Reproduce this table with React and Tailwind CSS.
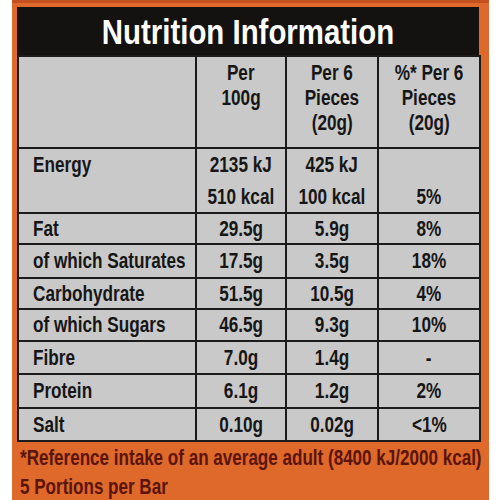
import React from "react";

const font = {
  fontFamily: '"Liberation Sans", Arial, sans-serif',
};

const rows = [
  { name: "Fat", a: "29.5g", b: "5.9g", c: "8%", h: "h-[31px]" },
  { name: "of which Saturates", a: "17.5g", b: "3.5g", c: "18%", h: "h-[34px]" },
  { name: "Carbohydrate", a: "51.5g", b: "10.5g", c: "4%", h: "h-[31px]" },
  { name: "of which Sugars", a: "46.5g", b: "9.3g", c: "10%", h: "h-[32px]" },
  { name: "Fibre", a: "7.0g", b: "1.4g", c: "-", h: "h-[33px]" },
  { name: "Protein", a: "6.1g", b: "1.2g", c: "2%", h: "h-[34px]" },
  { name: "Salt", a: "0.10g", b: "0.02g", c: "<1%", h: "h-[33px]" },
];

const cell = "border-2 border-[#1b1b1b] text-center p-0 whitespace-nowrap leading-[24px]";

// condensed look: narrow the glyphs without touching layout
const Txt = ({ children, left }) => (
  <span className={"inline-block scale-x-[0.78] " + (left ? "origin-left" : "origin-center")}>
    {children}
  </span>
);

export default function App() {
  return (
    <div className="w-[500px] h-[500px] bg-white overflow-hidden" style={font}>
      <div className="ml-[12px] w-[477px] h-full bg-[#df682b] pt-[4px] pl-[5px] border-t-[3px] border-[#c4501f]">
        <div className="w-[462px] h-[48px] bg-[#141111] flex items-center justify-center">
          <span className="inline-block scale-x-[0.84] text-white font-bold text-[35px] leading-none">
            Nutrition Information
          </span>
        </div>
        <table className="w-[462px] border-collapse bg-[#c9c9c9] text-[#161616] font-bold text-[22px] table-fixed">
          <colgroup>
            <col className="w-[178px]" />
            <col className="w-[90px]" />
            <col className="w-[92px]" />
            <col className="w-[102px]" />
          </colgroup>
          <tbody>
            <tr className="h-[92px]">
              <td className={cell}></td>
              <td className={cell + " align-top pt-[3px] leading-[25px]"}>
                <Txt>Per</Txt>
                <br />
                <Txt>100g</Txt>
              </td>
              <td className={cell + " align-top pt-[3px] leading-[25px]"}>
                <Txt>Per 6</Txt>
                <br />
                <Txt>Pieces</Txt>
                <br />
                <Txt>(20g)</Txt>
              </td>
              <td className={cell + " align-top pt-[3px] leading-[25px]"}>
                <Txt>%* Per 6</Txt>
                <br />
                <Txt>Pieces</Txt>
                <br />
                <Txt>(20g)</Txt>
              </td>
            </tr>
            <tr className="h-[65px]">
              <td className={cell + " text-left pl-[14px] align-top pt-[4px]"}>
                <Txt left>Energy</Txt>
              </td>
              <td className={cell + " align-top pt-[4px]"}>
                <div className="h-[32px]">
                  <Txt>2135 kJ</Txt>
                </div>
                <Txt>510 kcal</Txt>
              </td>
              <td className={cell + " align-top pt-[4px]"}>
                <div className="h-[32px]">
                  <Txt>425 kJ</Txt>
                </div>
                <Txt>100 kcal</Txt>
              </td>
              <td className={cell + " align-top pt-[36px]"}>
                <Txt>5%</Txt>
              </td>
            </tr>
            {rows.map((r) => (
              <tr key={r.name} className={r.h}>
                <td className={cell + " align-middle text-left pl-[14px]"}>
                  <Txt left>{r.name}</Txt>
                </td>
                <td className={cell + " align-middle"}>
                  <Txt>{r.a}</Txt>
                </td>
                <td className={cell + " align-middle"}>
                  <Txt>{r.b}</Txt>
                </td>
                <td className={cell + " align-middle"}>
                  <Txt>{r.c}</Txt>
                </td>
              </tr>
            ))}
          </tbody>
        </table>
        <div className="pt-[1px] pl-[3px] text-[#5a1409] font-bold text-[22px] leading-[29px] whitespace-nowrap">
          <div>
            <span className="inline-block scale-x-[0.775] origin-left">
              *Reference intake of an average adult (8400 kJ/2000 kcal)
            </span>
          </div>
          <div>
            <span className="inline-block scale-x-[0.775] origin-left">5 Portions per Bar</span>
          </div>
        </div>
      </div>
    </div>
  );
}
